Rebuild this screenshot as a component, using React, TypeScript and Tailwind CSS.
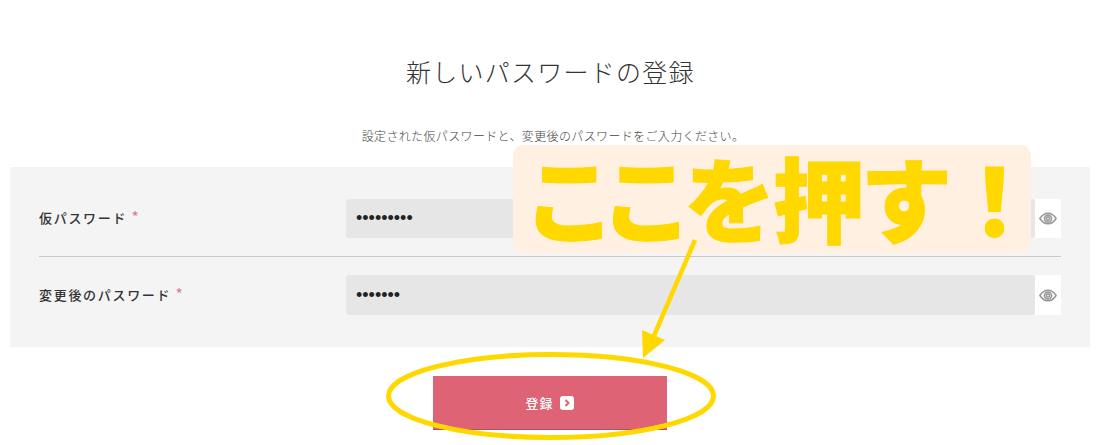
const font = "[font-family:'Noto_Sans_CJK_JP','Noto_Sans',sans-serif]";

function EyeIcon() {
  return (
    <svg width="18" height="13" viewBox="0 0 20 14" fill="none" stroke="#969696" strokeWidth="1.7">
      <path d="M1 7C3.4 3.2 6.4 1.2 10 1.2S16.6 3.2 19 7c-2.4 3.8-5.4 5.8-9 5.8S3.4 10.8 1 7z" />
      <circle cx="10" cy="7" r="4" />
      <circle cx="10" cy="7" r="1.8" />
    </svg>
  );
}

function PasswordRow({ label, value, h }: { label: string; value: string; h: string }) {
  return (
    <div className="flex items-center">
      <label className="w-[307px] -translate-y-px text-[13px] font-medium tracking-[0.13em] text-[#333]">
        {label} <span className="relative top-[-1px] text-[14px] text-[#e5799a]">*</span>
      </label>
      <input
        type="password"
        readOnly
        value={value}
        className={`${h} w-[689px] rounded-[3px] bg-[#e6e6e6] px-[10px] font-['Liberation_Sans'] text-[18px] text-[#222] outline-none`}
      />
      <span className={`${h} flex w-[26px] items-center justify-center bg-white`}>
        <EyeIcon />
      </span>
    </div>
  );
}

export default function App() {
  return (
    <div className={`relative h-[445px] w-[1098px] overflow-hidden bg-white ${font}`}>
      <div className="flex flex-col items-center pt-[54px] pl-[3px]">
        <h1 className="text-[25px] leading-[35px] font-light tracking-[0.05em] text-[#333]">新しいパスワードの登録</h1>
        <p className="mt-[38px] pl-[5px] text-[12px] leading-[18px] font-light tracking-[0.03em] text-[#444]">
          設定された仮パスワードと、変更後のパスワードをご入力ください。
        </p>
      </div>

      <div className="mx-[10px] mt-[22px] h-[180px] w-[1080px] bg-[#f4f4f4] px-[29px] pt-[32px]">
        <PasswordRow label="仮パスワード" value="aaaaaaaaa" h="h-[39px]" />
        <div className="my-[18px] h-px bg-[#c8c8c8]" />
        <PasswordRow label="変更後のパスワード" value="aaaaaaa" h="h-[40px]" />
      </div>

      <div className="mt-[29px] flex justify-center pl-[2px]">
        <button className="flex h-[54px] w-[234px] items-center justify-center gap-[6px] border-b border-[#b94e5e] bg-[#dd6375] pr-[1px] text-[13px] font-medium tracking-[0.08em] text-white">
          登録
          <span className="flex h-[14px] w-[14px] items-center justify-center rounded-[3px] bg-white">
            <svg width="8" height="8" viewBox="0 0 8 8" fill="none" stroke="#dd6375" strokeWidth="2">
              <path d="M2.5 1L5.5 4L2.5 7" />
            </svg>
          </span>
        </button>
      </div>

      {/* 注釈 */}
      <div className="absolute left-[513px] top-[145px] flex h-[108px] w-[518px] items-center rounded-[10px] bg-[#fff0e2] pl-[17px] text-[92px] leading-none font-black whitespace-nowrap text-[#ffd800] [-webkit-text-stroke:1px_#ffd800] [font-feature-settings:'palt']">
        <span className="-translate-y-[3px]">
          ここを押す<span className="ml-[24px]">！</span>
        </span>
      </div>
      <svg className="pointer-events-none absolute left-0 top-0" width="1098" height="445" fill="none">
        <ellipse cx="551" cy="396" rx="162.5" ry="41.5" stroke="#ffd800" strokeWidth="5" />
        <path d="M695 240L653 338" stroke="#ffd800" strokeWidth="4.5" />
        <path d="M642 330L665 340L643 358Z" fill="#ffd800" />
      </svg>
    </div>
  );
}
